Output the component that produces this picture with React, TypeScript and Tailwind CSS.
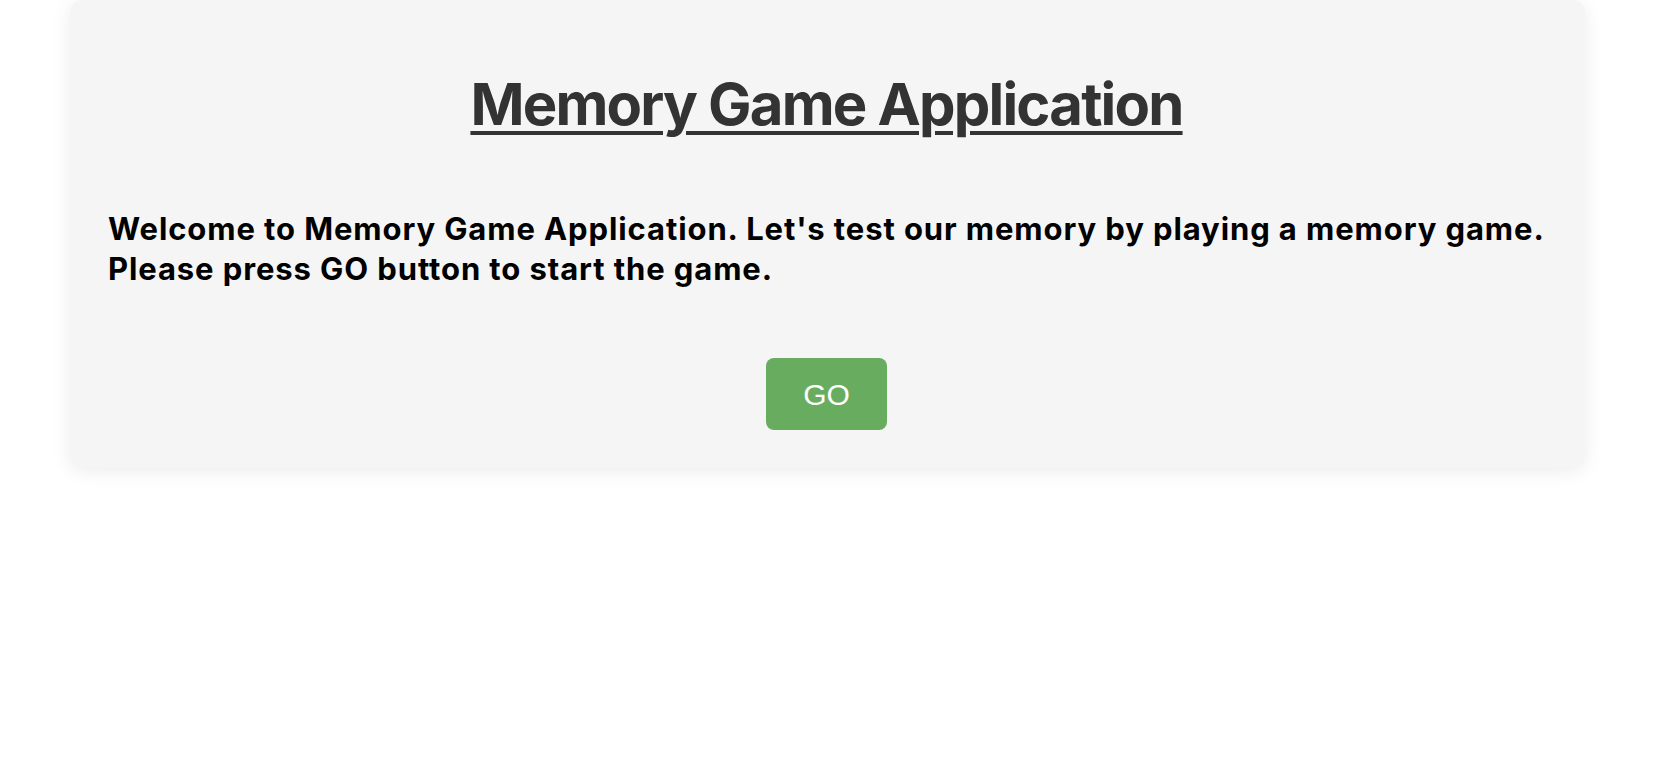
export default function App() {
  return (
    <div className="min-h-screen bg-white" style={{ fontFamily: "Inter, 'Noto Sans', sans-serif" }}>
      <div className="ml-[70px] w-[1515px] rounded-[12px] bg-[#f5f5f5] pl-[38px] pr-[40px] pt-[69px] pb-[37px] shadow-[0_4px_20px_rgba(0,0,0,0.08)]">
        <h1 className="text-center text-[58px] leading-[70px] font-bold tracking-[-1.8px] text-[#333333] underline decoration-[4px] underline-offset-[6px]">
          Memory Game Application
        </h1>
        <p className="mt-[70px] text-[31px] leading-[40px] font-bold tracking-[0.9px] text-black">
          Welcome to Memory Game Application. Let's test our memory by playing a memory game. Please press GO button to start the game.
        </p>
        <div className="mt-[69px] flex justify-center">
          <button
            className="flex h-[72px] w-[121px] items-center justify-center rounded-[8px] bg-[#68ad5f] text-[30px] text-white"
            style={{ fontFamily: "'Liberation Sans', Arial, sans-serif" }}
          >
            GO
          </button>
        </div>
      </div>
    </div>
  );
}
